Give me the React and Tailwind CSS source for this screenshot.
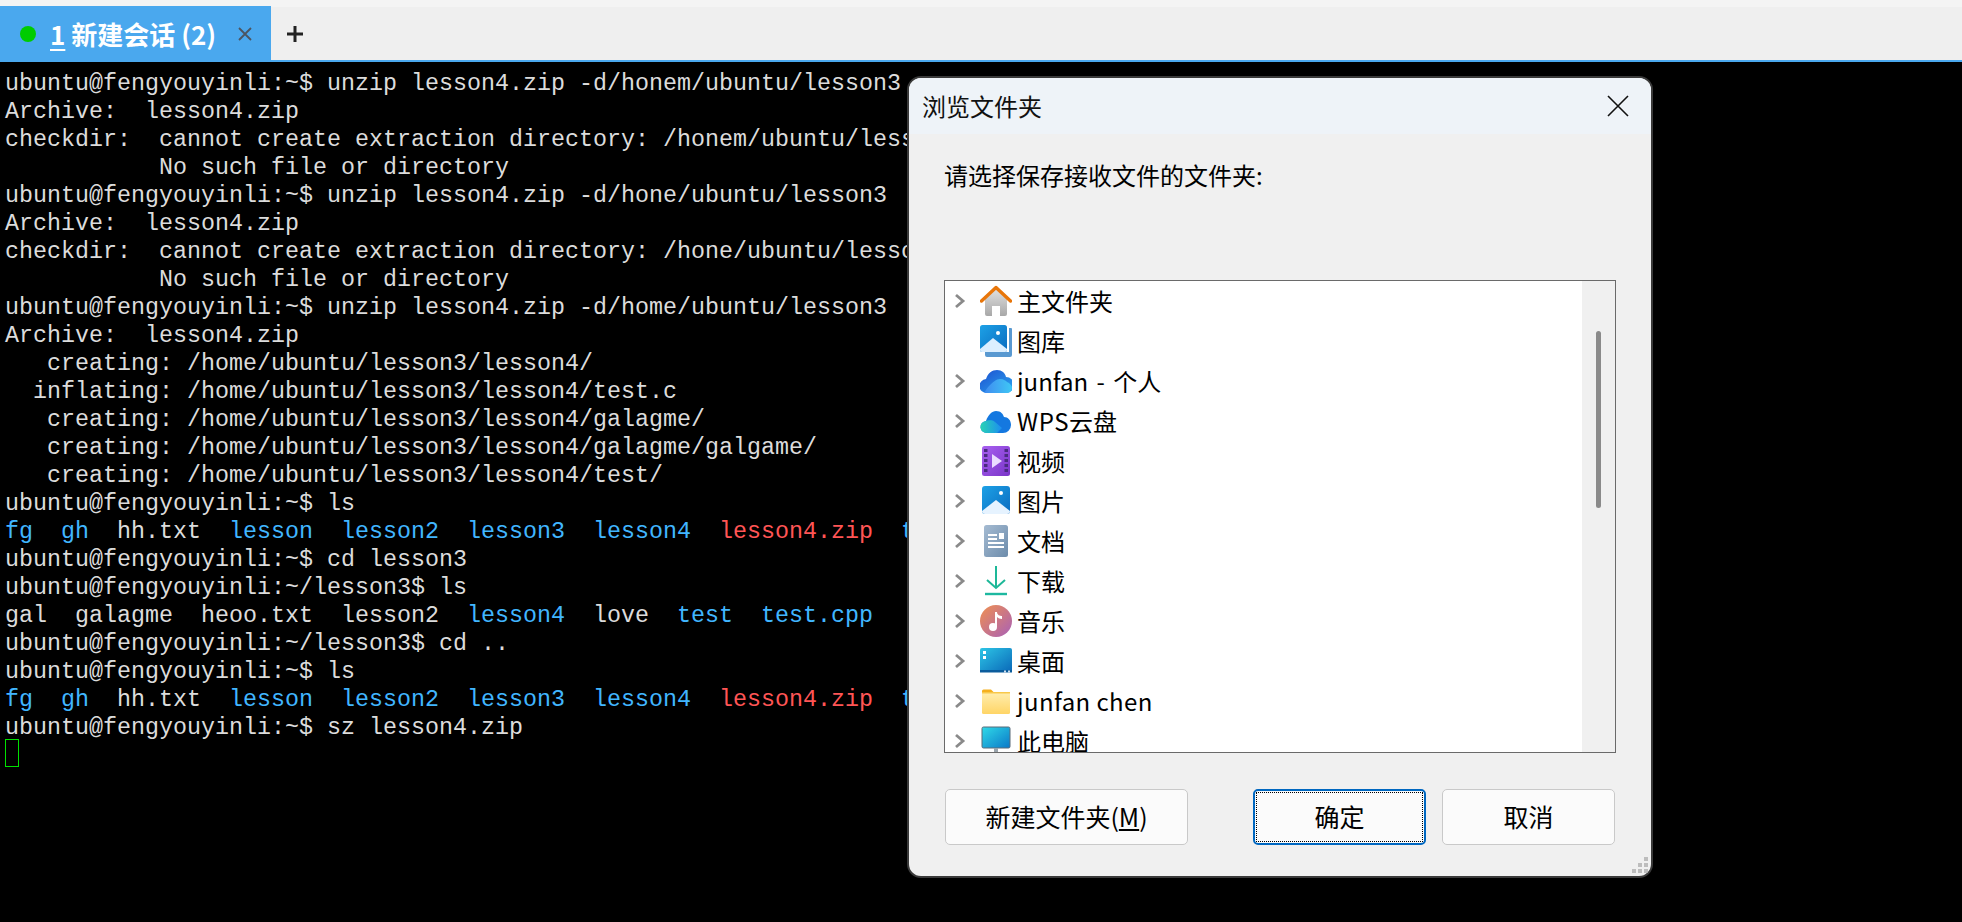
import React from "react";

const cjk = { fontFamily: '"Noto Sans CJK SC","Noto Sans",sans-serif' };
const B = ({ c }) => <span className="text-[#41b6ff]">{c}</span>;
const R = ({ c }) => <span className="text-[#ff5555]">{c}</span>;
const P = "ubuntu@fengyouyinli:~$ ";
const P3 = "ubuntu@fengyouyinli:~/lesson3$ ";

const listing = (
  <>
    <B c="fg" />{"  "}<B c="gh" />{"  hh.txt  "}<B c="lesson" />{"  "}<B c="lesson2" />{"  "}<B c="lesson3" />{"  "}<B c="lesson4" />{"  "}<R c="lesson4.zip" />{"  "}<B c="test" />
  </>
);

const lines = [
  P + "unzip lesson4.zip -d/honem/ubuntu/lesson3",
  "Archive:  lesson4.zip",
  "checkdir:  cannot create extraction directory: /honem/ubuntu/lesson3:",
  "           No such file or directory",
  P + "unzip lesson4.zip -d/hone/ubuntu/lesson3",
  "Archive:  lesson4.zip",
  "checkdir:  cannot create extraction directory: /hone/ubuntu/lesson3:",
  "           No such file or directory",
  P + "unzip lesson4.zip -d/home/ubuntu/lesson3",
  "Archive:  lesson4.zip",
  "   creating: /home/ubuntu/lesson3/lesson4/",
  "  inflating: /home/ubuntu/lesson3/lesson4/test.c",
  "   creating: /home/ubuntu/lesson3/lesson4/galagme/",
  "   creating: /home/ubuntu/lesson3/lesson4/galagme/galgame/",
  "   creating: /home/ubuntu/lesson3/lesson4/test/",
  P + "ls",
  listing,
  P + "cd lesson3",
  P3 + "ls",
  <>
    {"gal  galagme  heoo.txt  lesson2  "}<B c="lesson4" />{"  love  "}<B c="test" />{"  "}<B c="test.cpp" />
  </>,
  P3 + "cd ..",
  P + "ls",
  listing,
  P + "sz lesson4.zip",
];

const Chevron = () => (
  <svg width="12" height="16" viewBox="0 0 12 16" className="shrink-0">
    <path d="M2 2l7 6-7 6" fill="none" stroke="#8a8a8a" strokeWidth="2.8" />
  </svg>
);

const Home = () => (
  <svg width="32" height="32" viewBox="0 0 32 32">
    <defs>
      <linearGradient id="hm" x1="0" y1="0" x2="0" y2="1"><stop offset="0" stopColor="#e0e0e0" /><stop offset="1" stopColor="#a8a8a8" /></linearGradient>
    </defs>
    <path d="M5 14L16 4l11 10v15a2 2 0 0 1-2 2h-5V21h-8v10H7a2 2 0 0 1-2-2z" fill="url(#hm)" />
    <path d="M1.5 16L16 2.5 30.5 16" fill="none" stroke="#e8760a" strokeWidth="3.4" strokeLinecap="round" strokeLinejoin="round" />
  </svg>
);
const Gallery = () => (
  <svg width="32" height="32" viewBox="0 0 32 32">
    <defs>
      <linearGradient id="gl" x1="0" y1="0" x2="1" y2="1"><stop offset="0" stopColor="#1da1e6" /><stop offset="1" stopColor="#0a6cc0" /></linearGradient>
    </defs>
    <path d="M5 27h24V3h2a1 1 0 0 1 1 1v26a2 2 0 0 1-2 2H7a2 2 0 0 1-2-2z" fill="#2f7fc6" opacity="0.8" />
    <rect x="0" y="0" width="27" height="27" rx="2.5" fill="url(#gl)" />
    <circle cx="18" cy="8" r="2" fill="#fff" />
    <path d="M0 24l13-11 14 11v1a2 2 0 0 1-2 2H2a2 2 0 0 1-2-2z" fill="#dcefff" />
  </svg>
);
const Picture = () => (
  <svg width="32" height="32" viewBox="0 0 32 32">
    <defs>
      <linearGradient id="pc" x1="0" y1="0" x2="1" y2="1"><stop offset="0" stopColor="#1da1e6" /><stop offset="1" stopColor="#0a6cc0" /></linearGradient>
    </defs>
    <rect x="2" y="1" width="28" height="28" rx="3" fill="url(#pc)" />
    <circle cx="21" cy="8" r="2" fill="#fff" />
    <path d="M2 26l14-11 14 11v0a3 3 0 0 1-3 3H5a3 3 0 0 1-3-3z" fill="#e6f3ff" />
  </svg>
);
const OneDrive = () => (
  <svg width="32" height="32" viewBox="0 0 32 32">
    <defs>
      <linearGradient id="od" x1="0" y1="0" x2="1" y2="1"><stop offset="0" stopColor="#1d4fd0" /><stop offset="1" stopColor="#2aa8f0" /></linearGradient>
      <linearGradient id="od2" x1="0" y1="0" x2="1" y2="0"><stop offset="0" stopColor="#3f8cf0" /><stop offset="1" stopColor="#3fc8f5" /></linearGradient>
    </defs>
    <path d="M7 28a7 7 0 0 1-1-14c2-6 6-9 11-9 5 0 8 3 9 7a8 8 0 0 1 0 16z" fill="url(#od)" />
    <path d="M5 28c-2 0 8-14 15-14 4 0 6 2 7 3 3 1 5 4 5 6a5 5 0 0 1-5 5z" fill="url(#od2)" />
  </svg>
);
const WpsCloud = () => (
  <svg width="32" height="32" viewBox="0 0 32 32">
    <defs>
      <linearGradient id="wp" x1="0" y1="0" x2="1" y2="0"><stop offset="0" stopColor="#28d3b4" /><stop offset="1" stopColor="#1d8df0" /></linearGradient>
    </defs>
    <path d="M7 28a6 6 0 0 1-1-12c2-6 6-10 10-10 5 0 7 3 8 6 4 0 7 3 7 8a8 8 0 0 1-8 8z" fill="#1478e0" />
    <path d="M7 28a6 6 0 0 1-1-12c1 0 5-2 9 1l7 6-5 5z" fill="url(#wp)" />
  </svg>
);
const Video = () => (
  <svg width="32" height="32" viewBox="0 0 32 32">
    <defs>
      <linearGradient id="vd" x1="0" y1="0" x2="1" y2="1"><stop offset="0" stopColor="#a860f0" /><stop offset="1" stopColor="#7a35c8" /></linearGradient>
    </defs>
    <rect x="2" y="1" width="28" height="30" rx="2.5" fill="url(#vd)" />
    {[3, 8, 13, 18, 23].map((y) => (
      <g key={y} fill="#4a2a80">
        <rect x="4" y={y + 1} width="3.5" height="3" />
        <rect x="24.5" y={y + 1} width="3.5" height="3" />
      </g>
    ))}
    <path d="M12 9l10 7-10 7z" fill="#eadcff" />
  </svg>
);
const Docs = () => (
  <svg width="32" height="32" viewBox="0 0 32 32">
    <defs>
      <linearGradient id="dc" x1="0" y1="0" x2="1" y2="1"><stop offset="0" stopColor="#a5bbd2" /><stop offset="1" stopColor="#6d8cab" /></linearGradient>
    </defs>
    <rect x="4" y="0" width="24" height="32" rx="2.5" fill="url(#dc)" />
    <g fill="#fff">
      <rect x="8" y="9" width="9" height="2" />
      <rect x="19" y="8" width="5" height="6" />
      <rect x="8" y="13" width="9" height="2" />
      <rect x="8" y="17" width="16" height="2" />
      <rect x="8" y="21" width="16" height="2" />
    </g>
  </svg>
);
const Download = () => (
  <svg width="32" height="32" viewBox="0 0 32 32">
    <path d="M16 1v22M7 15l9 8 9-8" fill="none" stroke="#1db898" strokeWidth="2" />
    <path d="M5 29h22" stroke="#1db8a0" strokeWidth="2.4" />
  </svg>
);
const Music = () => (
  <svg width="32" height="32" viewBox="0 0 32 32">
    <defs>
      <linearGradient id="mu" x1="0" y1="0" x2="1" y2="1"><stop offset="0" stopColor="#f09050" /><stop offset="1" stopColor="#a860b8" /></linearGradient>
    </defs>
    <circle cx="16" cy="16" r="16" fill="url(#mu)" />
    <circle cx="13" cy="22" r="4" fill="#fff" />
    <path d="M15 22V7h2c0 3 3 4 5 4v3c-2 0-4-1-5-2v10z" fill="#fff" />
  </svg>
);
const Desktop = () => (
  <svg width="32" height="32" viewBox="0 0 32 32">
    <defs>
      <linearGradient id="dk" x1="0" y1="0" x2="1" y2="1"><stop offset="0" stopColor="#2dc5e6" /><stop offset="1" stopColor="#0a68b8" /></linearGradient>
    </defs>
    <rect x="0" y="3" width="32" height="24" rx="2" fill="url(#dk)" />
    <rect x="0" y="25" width="32" height="2.5" fill="#0b5c9c" />
    <rect x="3" y="6" width="3" height="3" fill="#fff" />
    <rect x="3" y="11" width="3" height="3" fill="#fff" />
    <rect x="24" y="25.5" width="2" height="2" fill="#cde" />
    <rect x="28" y="25.5" width="2" height="2" fill="#cde" />
  </svg>
);
const Folder = () => (
  <svg width="32" height="32" viewBox="0 0 32 32">
    <defs>
      <linearGradient id="fd" x1="0" y1="0" x2="0" y2="1"><stop offset="0" stopColor="#ffeeb0" /><stop offset="1" stopColor="#ffd566" /></linearGradient>
    </defs>
    <path d="M2 6a1.5 1.5 0 0 1 1.5-1.5H11l3 3H2z" fill="#f5b01e" />
    <rect x="2" y="7" width="28" height="22" rx="1.5" fill="url(#fd)" />
    <path d="M2 7h28v1.5H2z" fill="#f8c84a" />
  </svg>
);
const Pc = () => (
  <svg width="32" height="32" viewBox="0 0 32 32">
    <defs>
      <linearGradient id="pcx" x1="0" y1="0" x2="1" y2="1"><stop offset="0" stopColor="#30dae8" /><stop offset="1" stopColor="#0a78c8" /></linearGradient>
    </defs>
    <rect x="2" y="2" width="28" height="21" rx="1.5" fill="url(#pcx)" stroke="#5a6a78" strokeWidth="1" />
    <rect x="14" y="23" width="4" height="4" fill="#9aa4ac" />
    <rect x="9" y="27" width="14" height="2" fill="#aab2ba" />
  </svg>
);

const rows = [
  [true, <Home />, "主文件夹"],
  [false, <Gallery />, "图库"],
  [true, <OneDrive />, <>junfan<span className="mx-[3px]"> - </span>个人</>],
  [true, <WpsCloud />, <><span className="tracking-[0.6px]">WPS</span>云盘</>],
  [true, <Video />, "视频"],
  [true, <Picture />, "图片"],
  [true, <Docs />, "文档"],
  [true, <Download />, "下载"],
  [true, <Music />, "音乐"],
  [true, <Desktop />, "桌面"],
  [true, <Folder />, <span className="tracking-[0.4px]">junfan chen</span>],
  [true, <Pc />, "此电脑"],
];

function TreeRow({ chevron, icon, label }) {
  return (
    <div className="flex h-[40px] shrink-0 items-center">
      <div className="flex w-[35px] shrink-0 justify-end pr-[14px]">{chevron ? <Chevron /> : null}</div>
      <div className="h-[32px] w-[32px] shrink-0">{icon}</div>
      <span className="ml-[5px] whitespace-nowrap text-[24px] leading-[40px] text-black">{label}</span>
    </div>
  );
}

const btn = "flex h-[56px] items-center justify-center rounded-[5px] border border-[#c9c9c9] bg-[#fbfbfb] text-[25px] text-black";

export default function App() {
  return (
    <div className="relative h-[922px] w-[1962px] overflow-hidden bg-black" style={cjk}>
      {/* tab bar */}
      <div className="h-[62px] border-b-2 border-[#4aa8ee] bg-[#efefef]">
        <div className="h-[7px] bg-[#f4f4f4]" />
        <div className="flex h-[53px] items-center">
          <div className="flex h-[55px] w-[271px] shrink-0 items-center bg-[#4aa8ee] pl-[20px]">
            <span className="h-[16px] w-[16px] shrink-0 rounded-full bg-[#00cc00]" />
            <span className="ml-[14px] whitespace-nowrap text-[26px] font-bold text-white">
              <span className="underline underline-offset-4">1</span> 新建会话 (2)
            </span>
            <svg width="16" height="16" viewBox="0 0 16 16" className="ml-[21px] shrink-0">
              <path d="M2 2l12 12M14 2L2 14" stroke="#4c5560" strokeWidth="1.8" />
            </svg>
          </div>
          <svg width="16" height="16" viewBox="0 0 16 16" className="ml-[16px]">
            <path d="M8 0v16M0 8h16" stroke="#222" strokeWidth="3" />
          </svg>
        </div>
      </div>

      {/* terminal */}
      <div
        className="whitespace-pre px-[5px] pt-[8px] text-[23.33px] leading-[28px] text-[#dcdcdc]"
        style={{ fontFamily: '"Liberation Mono",monospace' }}
      >
        {lines.map((l, i) => (
          <div key={i} className="h-[28px]">{l}</div>
        ))}
        <div className="-mt-[3px] h-[28px] w-[14px] border border-[#00e000]" />
      </div>

      {/* dialog */}
      <div className="absolute left-[907px] top-[76px] flex h-[802px] w-[746px] flex-col overflow-hidden rounded-[14px] border-2 border-[#3a3a3a] bg-[#f0f0f0]">
        <div className="flex h-[56px] shrink-0 items-center justify-between bg-[#eef3f8] pl-[13px] pr-[22px]">
          <span className="text-[24px] text-[#111]">浏览文件夹</span>
          <svg width="22" height="22" viewBox="0 0 22 22">
            <path d="M1 1l20 20M21 1L1 21" stroke="#111" strokeWidth="1.6" />
          </svg>
        </div>
        <div className="flex flex-1 flex-col px-[35px] pt-[23px]">
          <div className="h-[36px] whitespace-nowrap text-[24px] leading-[36px] text-black">请选择保存接收文件的文件夹:</div>
          <div className="mt-[87px] flex h-[473px] shrink-0 overflow-hidden border border-[#6a6a6a] bg-white">
            <div className="flex h-full flex-1 flex-col overflow-hidden">
              {rows.map(([c, ic, t], i) => (
                <TreeRow key={i} chevron={c} icon={ic} label={t} />
              ))}
            </div>
            <div className="flex w-[33px] shrink-0 justify-center bg-[#f0f0f0] pt-[50px]">
              <div className="h-[177px] w-[5px] rounded-full bg-[#8a8a8a]" />
            </div>
          </div>
          <div className="mt-[36px] flex pl-[1px]">
            <div className={`${btn} w-[243px]`}>
              新建文件夹(<span className="underline underline-offset-2">M</span>)
            </div>
            <div className="ml-[65px] h-[56px] w-[173px] rounded-[5px] border-2 border-[#0067c0] bg-[#fbfbfb] p-[1px]">
              <div className="flex h-full items-center justify-center border border-dotted border-black text-[25px] text-black">确定</div>
            </div>
            <div className={`${btn} ml-[16px] w-[173px]`}>取消</div>
          </div>
        </div>
        {/* resize grip */}
        <svg width="18" height="18" viewBox="0 0 18 18" className="absolute bottom-[2px] right-[2px]">
          <g fill="#bdbdbd">
            <rect x="13" y="1" width="4" height="4" />
            <rect x="7" y="7" width="4" height="4" />
            <rect x="13" y="7" width="4" height="4" />
            <rect x="1" y="13" width="4" height="4" />
            <rect x="7" y="13" width="4" height="4" />
            <rect x="13" y="13" width="4" height="4" />
          </g>
        </svg>
      </div>
    </div>
  );
}
